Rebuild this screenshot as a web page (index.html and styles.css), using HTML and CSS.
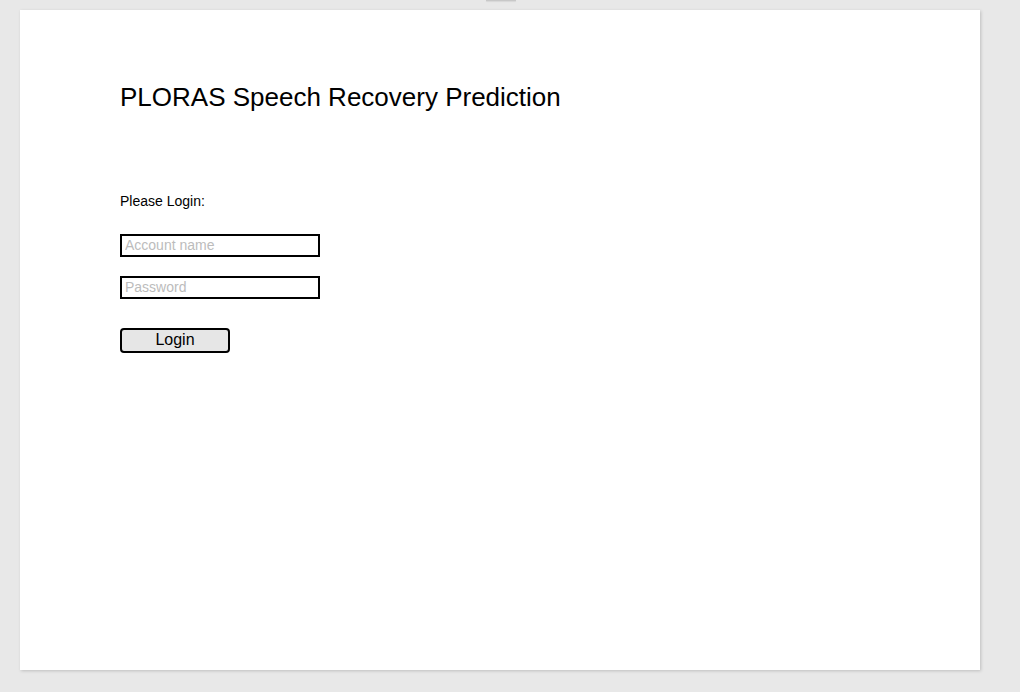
FILE: index.html
```html
<!DOCTYPE html>
<html>
<head>
<meta charset="utf-8">
<link rel="stylesheet" href="styles.css">
<title>PLORAS</title>
</head>
<body>
<div class="frame">
  <div class="tab"></div>
  <main class="card">
    <h1 class="title">PLORAS Speech Recovery Prediction</h1>
    <form class="login">
      <p class="prompt">Please Login:</p>
      <input class="field field-first" type="text" placeholder="Account name">
      <input class="field" type="password" placeholder="Password">
      <button class="btn" type="button">Login</button>
    </form>
  </main>
</div>
</body>
</html>
```
FILE: styles.css
```css
html, body {
  margin: 0;
  padding: 0;
  background: #e8e8e8;
  font-family: "Liberation Sans", Arial, sans-serif;
  color: #000;
}
.frame {
  width: 1020px;
  height: 692px;
  display: flex;
  flex-direction: column;
  align-items: flex-start;
}
.tab {
  width: 30px;
  height: 1px;
  background: #c8c8c8;
  box-shadow: 0 1px 1px rgba(0,0,0,0.08);
  margin-left: 486px;
}
.card {
  box-sizing: border-box;
  width: 960px;
  height: 660px;
  margin: 9px 0 0 20px;
  background: #fff;
  box-shadow: 1px 1px 3px rgba(0,0,0,0.18);
  padding: 72px 100px 0 100px;
}
.title {
  margin: 0;
  font-size: 26px;
  font-weight: normal;
  line-height: 30px;
}
.login {
  display: flex;
  flex-direction: column;
  align-items: flex-start;
  margin-top: 81px;
}
.prompt {
  margin: 0;
  font-size: 14px;
  line-height: 16px;
}
.field {
  box-sizing: border-box;
  width: 200px;
  height: 23px;
  margin: 19px 0 0 0;
  padding: 0 3px 1px 3px;
  border: 2px solid #000;
  border-radius: 0;
  font-family: "Liberation Sans", Arial, sans-serif;
  font-size: 14px;
  outline: none;
  background: #fff;
}
.field-first {
  margin-top: 25px;
}
.field::placeholder {
  color: #bcbcbc;
}
.btn {
  box-sizing: border-box;
  width: 110px;
  height: 25px;
  margin-top: 29px;
  padding: 0 0 2px 0;
  border: 2px solid #000;
  border-radius: 4px;
  background: #e6e6e6;
  font-family: "Liberation Sans", Arial, sans-serif;
  font-size: 16px;
  color: #000;
  line-height: 19px;
}
```
